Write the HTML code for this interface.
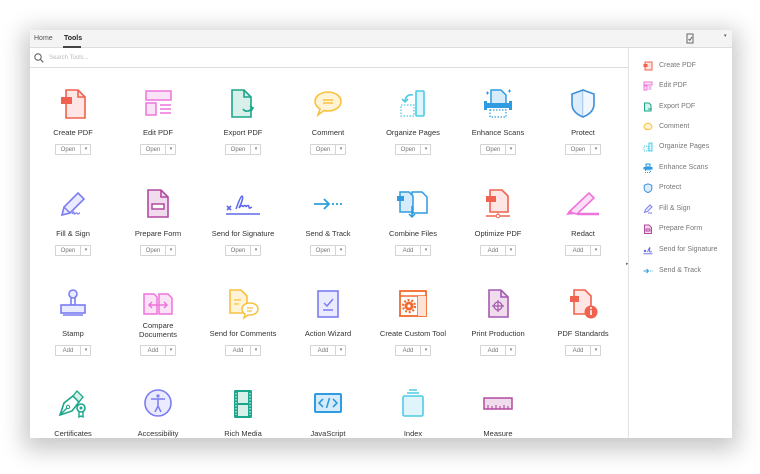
<!DOCTYPE html>
<html><head><meta charset="utf-8"><style>
*{margin:0;padding:0;box-sizing:border-box}
body{width:760px;height:474px;background:#fff;position:relative;overflow:hidden;font-family:"Liberation Sans",Arial,sans-serif}
#win{position:absolute;left:30px;top:30px;width:702px;height:408px;background:#fff;box-shadow:0 6px 22px 6px rgba(0,0,0,.22);overflow:hidden}
#tabs{position:absolute;left:0;top:0;width:702px;height:18px;background:#f4f4f4;border-bottom:1px solid #ddd;font-size:7px;color:#555}
#tabs span{position:absolute;top:5px}
#search{position:absolute;left:0;top:18px;width:598px;height:20px;border-bottom:1px solid #ddd;font-size:6px;color:#bbb}
#side{position:absolute;left:598px;top:18px;width:104px;height:390px;border-left:1px solid #e2e2e2}
.si{position:absolute;left:14px;font-size:7px;color:#777;height:10px;line-height:10px}
.si svg{position:absolute;left:0;top:0}
.si b{font-weight:normal;position:absolute;left:16px;white-space:nowrap}
.c{position:absolute;width:86px;text-align:center;font-size:7.5px;color:#333}
.c svg{display:block;margin:0 auto}
.lab{position:absolute;left:0;width:86px;line-height:9px}
.btn{position:absolute;left:25px;width:36px;height:11px;border:1px solid #d4d4d4;border-radius:1px;font-size:6px;color:#777;background:#fff}
.btn i{position:absolute;left:0;width:24px;top:2px;font-style:normal;text-align:center}
.btn u{position:absolute;left:24px;top:0;height:9px;border-left:1px solid #d4d4d4;width:11px;text-decoration:none;font-size:5px;text-align:center;line-height:9px}
</style></head><body>
<div id="win">
<div id="tabs"><span style="left:4px">Home</span><span style="left:34px;color:#222;font-weight:bold">Tools</span>
<div style="position:absolute;left:33px;top:16px;width:18px;height:1.5px;background:#444"></div>
<svg style="position:absolute;left:656px;top:3px" width="8" height="11"><rect x="1" y="1" width="6" height="9" fill="none" stroke="#666"/><path d="M2.5 6l1.3 1.3L6 4" stroke="#666" fill="none"/></svg>
<span style="left:694px;top:3px;font-size:5px">▾</span></div>
<div id="search"><svg style="position:absolute;left:4px;top:5px" width="10" height="10"><circle cx="4" cy="4" r="3.2" fill="none" stroke="#666" stroke-width="1.1"/><path d="M6.5 6.5l2.8 2.8" stroke="#666" stroke-width="1.2"/></svg><span style="position:absolute;left:19px;top:7px">Search Tools...</span></div>
<div style="position:absolute;left:596px;top:231px;font-size:5px;color:#666">▸</div>
<div id="side">
<div class="si" style="top:13px"><svg width="10" height="10"><rect x="2" y="1" width="7" height="8" fill="#fde3e0" stroke="#f0624f"/><rect x="0.5" y="3" width="4" height="3" fill="#f0624f"/></svg><b>Create PDF</b></div>
<div class="si" style="top:33px"><svg width="10" height="10"><rect x="1" y="1" width="8" height="3" fill="#fbe3f7" stroke="#ee74db"/><rect x="1" y="5" width="3" height="4" fill="#fbe3f7" stroke="#ee74db"/><path d="M5.5 6h3M5.5 8h3" stroke="#ee74db"/></svg><b>Edit PDF</b></div>
<div class="si" style="top:54px"><svg width="10" height="10"><path d="M1.5 1h4.5l2 2v6h-6.5z" fill="#d7f1ea" stroke="#1aa68a"/><path d="M5 7h4" stroke="#1aa68a"/></svg><b>Export PDF</b></div>
<div class="si" style="top:74px"><svg width="10" height="10"><ellipse cx="5" cy="4.5" rx="4" ry="3.2" fill="#fff3d6" stroke="#f8c13e"/><path d="M2.5 8l1.5-1.5" stroke="#f8c13e"/></svg><b>Comment</b></div>
<div class="si" style="top:94px"><svg width="10" height="10"><rect x="6" y="1" width="3" height="8" fill="#dff5fb" stroke="#4ecbe5"/><rect x="1" y="4" width="4" height="5" fill="none" stroke="#4ecbe5" stroke-dasharray="1 1"/></svg><b>Organize Pages</b></div>
<div class="si" style="top:115px"><svg width="10" height="10"><rect x="0.5" y="4" width="9" height="2.5" fill="#2f9be0"/><rect x="3" y="1" width="4" height="3" fill="#d7ecfa" stroke="#2f9be0"/><rect x="2.5" y="7" width="5" height="2.5" fill="none" stroke="#2f9be0" stroke-dasharray="1 1"/></svg><b>Enhance Scans</b></div>
<div class="si" style="top:135px"><svg width="10" height="10"><path d="M5 0.8L8.8 2.3v3.5c0 2-2 3.2-3.8 3.8C3.2 9 1.2 7.8 1.2 5.8V2.3z" fill="#dcecfb" stroke="#3c8fdb"/></svg><b>Protect</b></div>
<div class="si" style="top:156px"><svg width="10" height="10"><path d="M1.5 8.5l1-3L7 1l2 2-4.5 4.5z" fill="#ebebff" stroke="#7b7df0"/><path d="M5 9h4" stroke="#7b7df0"/></svg><b>Fill &amp; Sign</b></div>
<div class="si" style="top:176px"><svg width="10" height="10"><path d="M1.5 1h4.5l2.5 2.5v6h-7z" fill="#f1dcee" stroke="#b24a9e"/><rect x="3" y="5" width="4" height="2" fill="none" stroke="#b24a9e"/></svg><b>Prepare Form</b></div>
<div class="si" style="top:197px"><svg width="10" height="10"><path d="M1 5l2 2M3 5L1 7M4.5 7c1-2 1.5-4 2.3-4.5.6 1-1 3.5 0 4.5.6.5 1-.4 2-.4M0.5 8.8h9" stroke="#5e68ea" fill="none" stroke-width=".9"/></svg><b>Send for Signature</b></div>
<div class="si" style="top:218px"><svg width="10" height="10"><path d="M0.5 5h5M3.5 3l2 2-2 2" stroke="#2e9fd9" fill="none"/><path d="M7 5h.8M8.8 5h.8" stroke="#2e9fd9"/></svg><b>Send &amp; Track</b></div>
</div>

<!-- Row1 -->
<div class="c" style="left:0px;top:58px"><svg width="32" height="32"><path d="M9 2h12l7 7v21H9z" fill="#fde6e3" stroke="#f0624f" stroke-width="1.6"/><path d="M21 2v7h7" fill="none" stroke="#f0624f" stroke-width="1.6"/><rect x="4" y="9" width="11" height="7" fill="#f0624f"/></svg><div class="lab" style="top:40px">Create PDF</div><div class="btn" style="top:56px"><i>Open</i><u>▾</u></div></div>
<div class="c" style="left:85px;top:58px"><svg width="32" height="32"><rect x="4" y="3" width="25" height="9" fill="#fbe3f7" stroke="#ee74db" stroke-width="1.5"/><rect x="4" y="15" width="10" height="12" fill="#fbe3f7" stroke="#ee74db" stroke-width="1.5"/><path d="M18 17h11M18 21h11M18 25h11" stroke="#ee74db" stroke-width="1.5"/></svg><div class="lab" style="top:40px">Edit PDF</div><div class="btn" style="top:56px"><i>Open</i><u>▾</u></div></div>
<div class="c" style="left:170px;top:58px"><svg width="32" height="32"><path d="M5 2h12l7 7v20H5z" fill="#d7f1ea" stroke="#1aa68a" stroke-width="1.6"/><path d="M17 2v7h7" fill="none" stroke="#1aa68a" stroke-width="1.6"/><path d="M16 21c2 3 6 3 10-1M23 18l3 2-2 3" fill="none" stroke="#1aa68a" stroke-width="1.6"/></svg><div class="lab" style="top:40px">Export PDF</div><div class="btn" style="top:56px"><i>Open</i><u>▾</u></div></div>
<div class="c" style="left:255px;top:58px"><svg width="32" height="32"><path d="M16 4c7 0 13 4 13 9.5S23 23 16 23c-2 0-3 0-4-.5L6 27l2-6c-3-2-5-4.5-5-7.5C3 8 9 4 16 4z" fill="#fff3d6" stroke="#f8c13e" stroke-width="1.6"/><path d="M11 12h10M11 15h10" stroke="#f8c13e" stroke-width="1.4"/></svg><div class="lab" style="top:40px">Comment</div><div class="btn" style="top:56px"><i>Open</i><u>▾</u></div></div>
<div class="c" style="left:340px;top:58px"><svg width="32" height="32"><rect x="19" y="3" width="8" height="25" rx="1" fill="#dff5fb" stroke="#4ecbe5" stroke-width="1.6"/><rect x="4" y="17" width="13" height="11" fill="none" stroke="#4ecbe5" stroke-width="1.3" stroke-dasharray="1.5 1.5"/><path d="M16 7c-5-1-8 2-8 7M5 11l3 3 3-3" fill="none" stroke="#4ecbe5" stroke-width="1.6"/></svg><div class="lab" style="top:40px">Organize Pages</div><div class="btn" style="top:56px"><i>Open</i><u>▾</u></div></div>
<div class="c" style="left:425px;top:58px"><svg width="32" height="32"><path d="M9 2h10l5 5v9H9z" fill="#d7ecfa" stroke="#2f9be0" stroke-width="1.5"/><rect x="2" y="15" width="28" height="5" fill="#2f9be0"/><rect x="2" y="13" width="3" height="9" fill="#2f9be0"/><rect x="27" y="13" width="3" height="9" fill="#2f9be0"/><rect x="8" y="22" width="16" height="7" fill="none" stroke="#2f9be0" stroke-width="1.2" stroke-dasharray="1.5 1.5"/><path d="M4 5h3M5.5 3.5v3M26 3h3M27.5 1.5v3" stroke="#2f9be0"/></svg><div class="lab" style="top:40px">Enhance Scans</div><div class="btn" style="top:56px"><i>Open</i><u>▾</u></div></div>
<div class="c" style="left:510px;top:58px"><svg width="32" height="32"><path d="M16 2l11 4v10c0 7-6 11-11 13C11 27 5 23 5 16V6z" fill="#dcecfb" stroke="#3c8fdb" stroke-width="1.6"/><path d="M16 2v27" stroke="#3c8fdb" stroke-width=".6"/><path d="M16 3l10 4v9c0 6-5 10-10 12z" fill="#fff" opacity=".6"/></svg><div class="lab" style="top:40px">Protect</div><div class="btn" style="top:56px"><i>Open</i><u>▾</u></div></div>
<!-- Row2 -->
<div class="c" style="left:0px;top:158px"><svg width="32" height="32"><path d="M5 27l2-8L21 5l6 6-14 14z" fill="#ebebff" stroke="#7b7df0" stroke-width="1.6"/><path d="M7 19l6 6" stroke="#7b7df0" stroke-width="1.4"/><path d="M15 26c1-2 2-3 2-1s1 1 2 0 1 1 2 1 1-1 2-1" fill="none" stroke="#7b7df0" stroke-width="1.2"/></svg><div class="lab" style="top:41px">Fill &amp; Sign</div><div class="btn" style="top:57px"><i>Open</i><u>▾</u></div></div>
<div class="c" style="left:85px;top:158px"><svg width="32" height="32"><path d="M6 2h13l7 7v20H6z" fill="#f1dcee" stroke="#b24a9e" stroke-width="1.6"/><path d="M19 2v7h7" fill="none" stroke="#b24a9e" stroke-width="1.6"/><rect x="10" y="16" width="12" height="5" fill="#fff" stroke="#b24a9e" stroke-width="1.5"/></svg><div class="lab" style="top:41px">Prepare Form</div><div class="btn" style="top:57px"><i>Open</i><u>▾</u></div></div>
<div class="c" style="left:170px;top:158px"><svg width="36" height="32"><path d="M2 18l4 4M6 18l-4 4" stroke="#5e68ea" stroke-width="1.6"/><path d="M11 21c2-5 4-12 6-13 2 1-1 8-3 12 2-3 4-3 4-1 1-2 3-2 3 0 1-2 3-2 3 0s1 1 3 0" fill="none" stroke="#5e68ea" stroke-width="1.5"/><path d="M1 26h34" stroke="#5e68ea" stroke-width="1.4"/></svg><div class="lab" style="top:41px">Send for Signature</div><div class="btn" style="top:57px"><i>Open</i><u>▾</u></div></div>
<div class="c" style="left:255px;top:158px"><svg width="32" height="32"><path d="M2 16h15M12 11l5 5-5 5" fill="none" stroke="#2e9fd9" stroke-width="1.8"/><circle cx="21" cy="16" r="1.1" fill="#2e9fd9"/><circle cx="25" cy="16" r="1.1" fill="#2e9fd9"/><circle cx="29" cy="16" r="1.1" fill="#2e9fd9"/></svg><div class="lab" style="top:41px">Send &amp; Track</div><div class="btn" style="top:57px"><i>Open</i><u>▾</u></div></div>
<div class="c" style="left:340px;top:158px"><svg width="34" height="32"><path d="M16 4h10l5 5v16H16z" fill="#fff" stroke="#2f9be0" stroke-width="1.5"/><path d="M4 4h9l4 4v16H4z" fill="#d7ecfa" stroke="#2f9be0" stroke-width="1.5"/><rect x="1" y="8" width="7" height="5" fill="#2f9be0"/><path d="M16 18v11M13 26l3 3 3-3" fill="none" stroke="#2f9be0" stroke-width="1.5"/></svg><div class="lab" style="top:41px">Combine Files</div><div class="btn" style="top:57px"><i>Add</i><u>▾</u></div></div>
<div class="c" style="left:425px;top:158px"><svg width="32" height="32"><path d="M8 2h12l6 6v16H8z" fill="#fde6e3" stroke="#f0624f" stroke-width="1.6"/><rect x="4" y="8" width="10" height="6" fill="#f0624f"/><path d="M4 28h24" stroke="#f0624f" stroke-width="1.4"/><circle cx="16" cy="28" r="1.8" fill="#fff" stroke="#f0624f"/><path d="M16 24v2" stroke="#f0624f"/></svg><div class="lab" style="top:41px">Optimize PDF</div><div class="btn" style="top:57px"><i>Add</i><u>▾</u></div></div>
<div class="c" style="left:510px;top:158px"><svg width="36" height="32"><path d="M4 24L24 5l5 5-17 16z" fill="#fbe0f7" stroke="#ee74db" stroke-width="1.6"/><path d="M1 27l4-5 5 4z" fill="#ee74db"/><path d="M12 26h22" stroke="#ee74db" stroke-width="2.5"/></svg><div class="lab" style="top:41px">Redact</div><div class="btn" style="top:57px"><i>Add</i><u>▾</u></div></div>
<!-- Row3 -->
<div class="c" style="left:0px;top:258px"><svg width="32" height="32"><circle cx="16" cy="6" r="4" fill="#ebebff" stroke="#7b7df0" stroke-width="1.6"/><path d="M14 10v7h4v-7" fill="none" stroke="#7b7df0" stroke-width="1.6"/><rect x="4" y="17" width="24" height="8" fill="#ebebff" stroke="#7b7df0" stroke-width="1.6"/><path d="M6 27h20" stroke="#7b7df0" stroke-width="1.4"/></svg><div class="lab" style="top:41px">Stamp</div><div class="btn" style="top:57px"><i>Add</i><u>▾</u></div></div>
<div class="c" style="left:85px;top:258px"><svg width="34" height="32"><path d="M3 6h10l3 3v17H3z" fill="#fbe3f7" stroke="#ee74db" stroke-width="1.5"/><path d="M18 6h9l4 4v16H18z" fill="#fbe3f7" stroke="#ee74db" stroke-width="1.5"/><path d="M8 17h18M11 14l-3 3 3 3M23 14l3 3-3 3" fill="none" stroke="#ee74db" stroke-width="1.5"/></svg><div class="lab" style="top:33px">Compare<br>Documents</div><div class="btn" style="top:57px"><i>Add</i><u>▾</u></div></div>
<div class="c" style="left:170px;top:258px"><svg width="34" height="32"><path d="M4 2h11l6 6v17H4z" fill="#fff3d6" stroke="#f8c13e" stroke-width="1.6"/><path d="M8 12h7M8 16h5" stroke="#f8c13e" stroke-width="1.3"/><path d="M24 15c5 0 8 3 8 6s-3 6-8 6h-2l-4 3 1-4c-2-1-3-3-3-5 0-3 3-6 8-6z" fill="#fff" stroke="#f8c13e" stroke-width="1.5"/><path d="M21 20h6M21 23h5" stroke="#f8c13e" stroke-width="1.2"/></svg><div class="lab" style="top:41px">Send for Comments</div><div class="btn" style="top:57px"><i>Add</i><u>▾</u></div></div>
<div class="c" style="left:255px;top:258px"><svg width="32" height="32"><rect x="6" y="3" width="20" height="26" fill="#ebebff" stroke="#7b7df0" stroke-width="1.6"/><path d="M12 15l3 3 6-7M11 22h10" fill="none" stroke="#7b7df0" stroke-width="1.5"/></svg><div class="lab" style="top:41px">Action Wizard</div><div class="btn" style="top:57px"><i>Add</i><u>▾</u></div></div>
<div class="c" style="left:340px;top:258px"><svg width="32" height="32"><rect x="3" y="3" width="26" height="25" fill="#fff" stroke="#f36a2e" stroke-width="1.8"/><path d="M3 8h26M21 8v20" stroke="#f36a2e" stroke-width="1.5"/><rect x="21" y="8" width="8" height="20" fill="#fde3d6"/><circle cx="12" cy="18" r="4.5" fill="#f36a2e"/><circle cx="12" cy="18" r="6" fill="none" stroke="#f36a2e" stroke-width="2.2" stroke-dasharray="2 1.8"/><circle cx="12" cy="18" r="1.6" fill="#fff"/></svg><div class="lab" style="top:41px">Create Custom Tool</div><div class="btn" style="top:57px"><i>Add</i><u>▾</u></div></div>
<div class="c" style="left:425px;top:258px"><svg width="32" height="32"><path d="M7 2h12l7 7v20H7z" fill="#f1dcee" stroke="#a35ab0" stroke-width="1.6"/><path d="M19 2v7h7" fill="none" stroke="#a35ab0" stroke-width="1.6"/><circle cx="16" cy="18" r="4" fill="none" stroke="#a35ab0" stroke-width="1.3"/><path d="M16 12v12M10 18h12" stroke="#a35ab0" stroke-width="1.2"/></svg><div class="lab" style="top:41px">Print Production</div><div class="btn" style="top:57px"><i>Add</i><u>▾</u></div></div>
<div class="c" style="left:510px;top:258px"><svg width="34" height="32"><path d="M8 2h11l6 6v18H8z" fill="#fde6e3" stroke="#f0624f" stroke-width="1.6"/><rect x="4" y="8" width="9" height="6" fill="#f0624f"/><circle cx="25" cy="24" r="6.5" fill="#f0624f"/><path d="M25 22v5" stroke="#fff" stroke-width="1.6"/><circle cx="25" cy="20" r="1" fill="#fff"/></svg><div class="lab" style="top:41px">PDF Standards</div><div class="btn" style="top:57px"><i>Add</i><u>▾</u></div></div>
<!-- Row4 -->
<div class="c" style="left:0px;top:358px"><svg width="32" height="32"><path d="M3 27l4-12 9-7 6 6-7 9z" fill="#fff" stroke="#1aa68a" stroke-width="1.6"/><path d="M16 8l4-5 6 6-4 5z" fill="#d7f1ea" stroke="#1aa68a" stroke-width="1.3"/><path d="M3 27l7-7" stroke="#1aa68a" stroke-width="1.3"/><circle cx="11" cy="19" r="1.7" fill="none" stroke="#1aa68a"/><circle cx="24" cy="20" r="4" fill="#fff" stroke="#1aa68a" stroke-width="1.6"/><circle cx="24" cy="20" r="1.5" fill="#1aa68a"/><path d="M22 24v5l2-1 2 1v-5" fill="none" stroke="#1aa68a" stroke-width="1.4"/></svg><div class="lab" style="top:41px">Certificates</div></div>
<div class="c" style="left:85px;top:358px"><svg width="32" height="32"><circle cx="16" cy="15" r="13" fill="#ebebff" stroke="#7b7df0" stroke-width="1.6"/><circle cx="16" cy="8" r="1.6" fill="#7b7df0"/><path d="M9 11h14M16 11v7M13 24l3-6 3 6" fill="none" stroke="#7b7df0" stroke-width="1.5"/></svg><div class="lab" style="top:41px">Accessibility</div></div>
<div class="c" style="left:170px;top:358px"><svg width="32" height="32"><rect x="7" y="2" width="18" height="28" rx="1.5" fill="#1aa68a"/><rect x="11" y="4" width="10" height="11" fill="#d7f1ea"/><rect x="11" y="17" width="10" height="11" fill="#d7f1ea"/><path d="M9 5v22M23 5v22" stroke="#fff" stroke-width="1" stroke-dasharray="1.5 1.5"/></svg><div class="lab" style="top:41px">Rich Media</div></div>
<div class="c" style="left:255px;top:358px"><svg width="32" height="32"><rect x="3" y="6" width="26" height="18" rx="1" fill="#d7ecfa" stroke="#2f9be0" stroke-width="2"/><path d="M11 11l-4 4 4 4M21 11l4 4-4 4M17.5 10l-3 10" fill="none" stroke="#2f9be0" stroke-width="1.6"/></svg><div class="lab" style="top:41px">JavaScript</div></div>
<div class="c" style="left:340px;top:358px"><svg width="32" height="32"><path d="M12 2h8M10 5h12" stroke="#4ecbe5" stroke-width="1.5"/><rect x="6" y="8" width="20" height="20" rx="1.5" fill="#dff5fb" stroke="#4ecbe5" stroke-width="1.6"/></svg><div class="lab" style="top:41px">Index</div></div>
<div class="c" style="left:425px;top:358px"><svg width="34" height="32"><rect x="3" y="10" width="28" height="11" fill="#f1dcee" stroke="#b24a9e" stroke-width="1.5"/><path d="M7 21v-4M11 21v-3M15 21v-4M19 21v-3M23 21v-4M27 21v-3" stroke="#b24a9e" stroke-width="1.1"/></svg><div class="lab" style="top:41px">Measure</div></div>
</div>
</body></html>
